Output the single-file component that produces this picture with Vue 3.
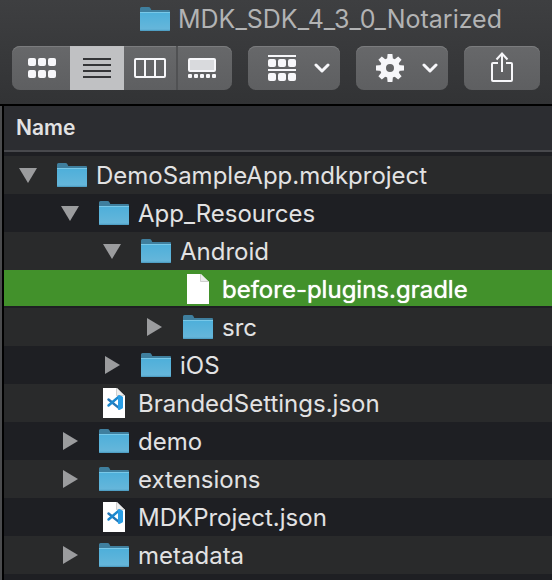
<script setup>
import { ref } from 'vue'

const view = ref('list')
const selected = ref('before-plugins.gradle')

const rows = [
  { name: 'DemoSampleApp.mdkproject', depth: 0, kind: 'folder', open: true },
  { name: 'App_Resources', depth: 1, kind: 'folder', open: true },
  { name: 'Android', depth: 2, kind: 'folder', open: true },
  { name: 'before-plugins.gradle', depth: 3, kind: 'file' },
  { name: 'src', depth: 3, kind: 'folder', open: false },
  { name: 'iOS', depth: 2, kind: 'folder', open: false },
  { name: 'BrandedSettings.json', depth: 1, kind: 'code' },
  { name: 'demo', depth: 1, kind: 'folder', open: false },
  { name: 'extensions', depth: 1, kind: 'folder', open: false },
  { name: 'MDKProject.json', depth: 1, kind: 'code' },
  { name: 'metadata', depth: 1, kind: 'folder', open: false }
]

const teeth = [0, 45, 90, 135, 180, 225, 270, 315]
</script>

<template>
  <div class="window">
    <svg class="defs" aria-hidden="true">
      <defs>
        <linearGradient id="folder-front" x1="0" y1="0" x2="0" y2="1">
          <stop offset="0" stop-color="#4dafda" />
          <stop offset="0.9" stop-color="#65b6da" />
          <stop offset="1" stop-color="#4897bd" />
        </linearGradient>
        <symbol id="folder" viewBox="0 0 30 24">
          <path d="M0 24V1.5Q0 0 1.5 0H8.5Q9.8 0 10.3 1L11.3 3H29Q30 3 30 4V24Z" fill="#3f7f9e" />
          <path d="M0 5H30V23Q30 24 29 24H1Q0 24 0 23Z" fill="url(#folder-front)" />
          <path d="M0 5.5H30" stroke="#78c8e8" />
        </symbol>
      </defs>
    </svg>

    <header class="top">
      <h1 class="title">
        <svg class="folder" aria-hidden="true"><use href="#folder" /></svg>
        <span>MDK_SDK_4_3_0_Notarized</span>
      </h1>
      <div class="toolbar">
        <div class="segments">
          <button class="seg" :class="{ on: view === 'icons' }" aria-label="Icon view" @click="view = 'icons'">
            <svg width="28" height="20" viewBox="0 0 28 20" fill="#f7f7fa">
              <rect v-for="i in 6" :key="i" :x="((i - 1) % 3) * 10" :y="i > 3 ? 12 : 0" width="8" height="8" rx="2" />
            </svg>
          </button>
          <button class="seg" :class="{ on: view === 'list' }" aria-label="List view" @click="view = 'list'">
            <svg width="28" height="20" viewBox="0 0 28 20" stroke="#343537" stroke-width="2">
              <path d="M0 1H28M0 7H28M0 13H28M0 19H28" />
            </svg>
          </button>
          <button class="seg" :class="{ on: view === 'columns' }" aria-label="Column view" @click="view = 'columns'">
            <svg width="32" height="20" viewBox="0 0 32 20" fill="none" stroke="#f7f7fa" stroke-width="2">
              <rect x="1" y="1" width="30" height="18" rx="1" />
              <path d="M11 1V19M21 1V19" />
            </svg>
          </button>
          <button class="seg" :class="{ on: view === 'gallery' }" aria-label="Gallery view" @click="view = 'gallery'">
            <svg width="28" height="20" viewBox="0 0 28 20" fill="#f7f7fa">
              <rect x="1" y="1" width="26" height="12" rx="1" fill="#d9dadd" stroke="#f7f7fa" stroke-width="2" />
              <rect v-for="i in 5" :key="i" :x="(i - 1) * 6" y="16" width="4" height="4" rx="1" />
            </svg>
          </button>
        </div>
        <button class="tool menu" aria-label="Group items">
          <svg width="28" height="26" viewBox="0 0 28 26" fill="#f7f7fa">
            <path d="M0 0H28V2H0ZM0 14H28V16H0Z" />
            <rect v-for="i in 6" :key="i" :x="((i - 1) % 3) * 10" :y="i > 3 ? 18 : 4" width="8" height="8" rx="2" />
          </svg>
          <svg class="chevron" width="16" height="10" viewBox="0 0 16 10"><path d="M2 2L8 8L14 2" /></svg>
        </button>
        <button class="tool menu" aria-label="Actions">
          <svg width="28" height="28" viewBox="-14 -14 28 28" fill="#f7f7fa">
            <circle r="7" fill="none" stroke="#f7f7fa" stroke-width="6" />
            <path v-for="a in teeth" :key="a" d="M-3 -8L-2.4 -14H2.4L3 -8Z" :transform="`rotate(${a})`" />
          </svg>
          <svg class="chevron" width="16" height="10" viewBox="0 0 16 10"><path d="M2 2L8 8L14 2" /></svg>
        </button>
        <button class="tool share" aria-label="Share">
          <svg width="22" height="30" viewBox="0 0 22 30" fill="none" stroke="#f7f7fa" stroke-width="2">
            <path d="M7 11H2Q1 11 1 12V28Q1 29 2 29H20Q21 29 21 28V12Q21 11 20 11H15" />
            <path d="M11 20V2M5.5 7.5L11 1.5L16.5 7.5" />
          </svg>
        </button>
      </div>
    </header>

    <main class="listing">
      <table class="files">
        <thead>
          <tr><th scope="col">Name</th></tr>
        </thead>
        <tbody>
          <tr
            v-for="row in rows"
            :key="row.name"
            :class="{ selected: row.name === selected }"
            @click="selected = row.name"
          >
            <td>
              <div class="entry">
                <span v-for="n in row.depth" :key="n" class="indent"></span>
                <button v-if="row.kind === 'folder'" class="twist" :aria-label="row.name" :aria-expanded="row.open">
                  <svg width="18" height="18" viewBox="0 0 18 18">
                    <path v-if="row.open" d="M0 2H18L9 17Z" />
                    <path v-else d="M2 0V18L17 9Z" />
                  </svg>
                </button>
                <span v-else class="twist"></span>
                <span class="icon">
                  <svg v-if="row.kind === 'folder'" class="folder" aria-hidden="true"><use href="#folder" /></svg>
                  <svg v-else class="doc" viewBox="0 0 22 30" aria-hidden="true">
                    <path d="M0 0H14L22 8V30H0Z" fill="#fff" />
                    <path d="M13.5 0V8H22Z" fill="#ededed" />
                    <path d="M13.5 0V7.5H21.5" fill="none" stroke="#cfcfcf" />
                    <g v-if="row.kind === 'code'" stroke-linejoin="round">
                      <path d="M5.5 11.5L15.5 19.5" stroke="#2478b8" stroke-width="2.5" stroke-linecap="round" />
                      <path d="M5.500 17.500L15.500 9" stroke="#1c89cf" stroke-width="2.500" stroke-linecap="round" />
                      <path d="M16 8L19 9.500V19.500L16 21Z" fill="#299ee6" stroke="#299ee6" stroke-width="2" />
                      <path d="M15 11.500V17.500L11.500 14.500Z" fill="#fff" />
                    </g>
                  </svg>
                </span>
                <span class="name">{{ row.name }}</span>
              </div>
            </td>
          </tr>
        </tbody>
      </table>
    </main>
  </div>
</template>

<style>
body {
  margin: 0;
  background: #1e1f23;
}
</style>

<style scoped>
.window {
  display: flex;
  flex-direction: column;
  height: 100vh;
  overflow: hidden;
  font-family: Inter, "Liberation Sans", sans-serif;
  font-size: 24px;
  color: #e2e2e3;
}
.defs {
  position: absolute;
  width: 0;
  height: 0;
}
button {
  display: flex;
  align-items: center;
  justify-content: center;
  margin: 0;
  padding: 0;
  border: 0;
  background: none;
}
.folder {
  display: block;
  flex: none;
  width: 30px;
  height: 24px;
}
.top {
  flex: none;
  padding: 0 12px 14px;
  border-bottom: 2px solid #000;
  background: linear-gradient(#3e3f41, #323335);
}
.title {
  display: flex;
  align-items: center;
  justify-content: center;
  gap: 8px;
  margin: 0;
  padding: 2px 0 10px 90px;
  font-size: 25px;
  font-weight: 400;
  line-height: 34px;
  color: #b2b3b4;
}
.toolbar {
  display: grid;
  grid-template-columns: 220fr 92fr 92fr 76fr;
  gap: 16px;
}
.segments {
  display: grid;
  grid-template-columns: 58fr 54fr 52fr 56fr;
  height: 44px;
  border-radius: 8px;
  overflow: hidden;
  background: linear-gradient(#67686a, #5e5f61);
  box-shadow: inset 0 1px #7b7c7e;
}
.seg:first-child {
  padding-left: 2px;
}
.seg:last-child {
  padding-right: 4px;
}
.seg + .seg {
  box-shadow: inset 2px 0 #505153;
}
.seg.on {
  background: #c0c1c3;
  box-shadow: none;
}
.seg.on + .seg {
  box-shadow: none;
}
.tool {
  height: 44px;
  border-radius: 8px;
  background: linear-gradient(#67686a, #5e5f61);
  box-shadow: inset 0 1px #7b7c7e;
}
.menu {
  justify-content: space-between;
  padding: 0 10px 0 20px;
}
.share svg {
  margin-bottom: 2px;
}
.chevron {
  fill: none;
  stroke: #f7f7fa;
  stroke-width: 3;
  stroke-linecap: round;
  stroke-linejoin: round;
}
.listing {
  flex: 1;
  min-height: 0;
  overflow: hidden;
  border-left: 2px solid #4a4b4d;
  box-shadow: inset 2px 0 #000;
  padding-left: 2px;
}
.files {
  width: 100%;
  border-collapse: collapse;
}
th {
  height: 44px;
  padding: 0 12px;
  border-bottom: 2px solid #48494d;
  background: #2c2d31;
  font-size: 21px;
  font-weight: 600;
  line-height: 44px;
  text-align: left;
}
thead::after {
  content: "";
  display: block;
  height: 4px;
}
td {
  padding: 0;
}
tbody tr:nth-child(odd) {
  background: #292a2b;
}
.entry {
  display: flex;
  align-items: center;
  height: 38px;
  padding-left: 14px;
}
tbody tr.selected {
  background: linear-gradient(#42912b 36px, #1e1f23 36px);
  color: #fff;
}
.indent {
  flex: none;
  width: 42px;
}
.twist {
  flex: none;
  width: 20px;
  margin-right: 19px;
}
.twist path {
  fill: #9b9c9e;
}
.icon {
  display: flex;
  flex: none;
  justify-content: center;
  width: 30px;
}
.doc {
  width: 22px;
  height: 30px;
}
.name {
  padding-left: 9px;
  white-space: nowrap;
}
.selected .name {
  text-shadow: 0 0 1px #fff;
}
</style>
